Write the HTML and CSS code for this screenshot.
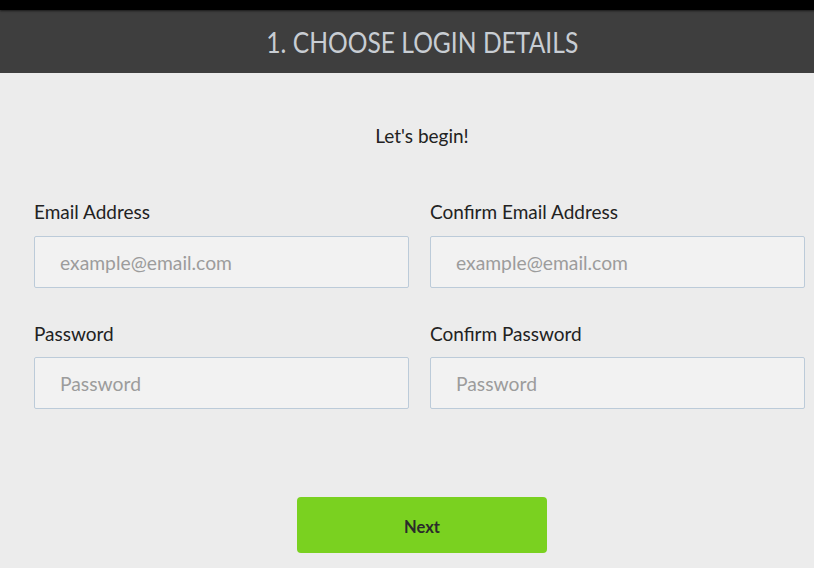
FILE: index.html
```html
<!DOCTYPE html>
<html lang="en">
<head>
<meta charset="utf-8">
<title>Choose login details</title>
<link rel="stylesheet" href="styles.css">
</head>
<body>
<div class="topbar"></div>
<header class="step-header">
  <h1 class="step-title">1. CHOOSE LOGIN DETAILS</h1>
</header>
<main class="page">
  <p class="intro">Let's begin!</p>
  <form class="login-form">
    <div class="field">
      <label class="field-label" for="email">Email Address</label>
      <input class="field-input" id="email" type="email" placeholder="example@email.com">
    </div>
    <div class="field">
      <label class="field-label" for="email2">Confirm Email Address</label>
      <input class="field-input" id="email2" type="email" placeholder="example@email.com">
    </div>
    <div class="field">
      <label class="field-label" for="pw">Password</label>
      <input class="field-input" id="pw" type="password" placeholder="Password">
    </div>
    <div class="field">
      <label class="field-label" for="pw2">Confirm Password</label>
      <input class="field-input" id="pw2" type="password" placeholder="Password">
    </div>
  </form>
  <div class="actions">
    <button class="next-btn" type="button">Next</button>
  </div>
</main>
</body>
</html>
```
FILE: styles.css
```css
html, body {
  margin: 0;
  padding: 0;
  overflow: hidden;
}
body {
  background: #ececec;
  font-family: Lato, "Open Sans", "Liberation Sans", sans-serif;
  color: #222;
  width: 844px;
}
.topbar {
  height: 10px;
  background: #000;
  box-shadow: 0 1px 2px rgba(0,0,0,0.6);
  position: relative;
  z-index: 1;
}
.step-header {
  height: 63px;
  background: #3e3e3e;
  display: flex;
  align-items: center;
  justify-content: center;
}
.step-title {
  margin: 0;
  font-size: 28px;
  font-weight: 400;
  color: #c8cdd3;
  line-height: 34px;
  transform: scaleX(0.88);
}
.page {
  display: flex;
  flex-direction: column;
}
.intro {
  margin: 52px 0 0;
  text-align: center;
  font-size: 19px;
  line-height: 22px;
  color: #222;
}
.login-form {
  margin: 54px 0 0 34px;
  display: grid;
  grid-template-columns: 375px 375px;
  column-gap: 21px;
  row-gap: 34px;
}
.field {
  display: flex;
  flex-direction: column;
}
.field-label {
  font-size: 19px;
  line-height: 22px;
  margin-bottom: 13px;
  color: #222;
}
.field + .field + .field .field-label {
  padding-top: 1px;
  margin-bottom: 12px;
}
.field-input {
  box-sizing: border-box;
  height: 52px;
  border: 1px solid #bccbd9;
  border-radius: 2px;
  background: #f2f2f2;
  padding: 0 25px;
  font-family: Lato, "Open Sans", sans-serif;
  font-size: 19.3px;
  color: #333;
  outline: none;
}
.field-input::placeholder {
  color: #9c9c9c;
}
.actions {
  display: flex;
  justify-content: center;
  margin-top: 88px;
}
.next-btn {
  width: 250px;
  height: 56px;
  border: none;
  border-radius: 4px;
  background: #7ad120;
  font-family: Lato, sans-serif;
  font-size: 16.5px;
  font-weight: 700;
  color: #2b2b2b;
  padding: 3px 0 0;
  cursor: pointer;
}
```
